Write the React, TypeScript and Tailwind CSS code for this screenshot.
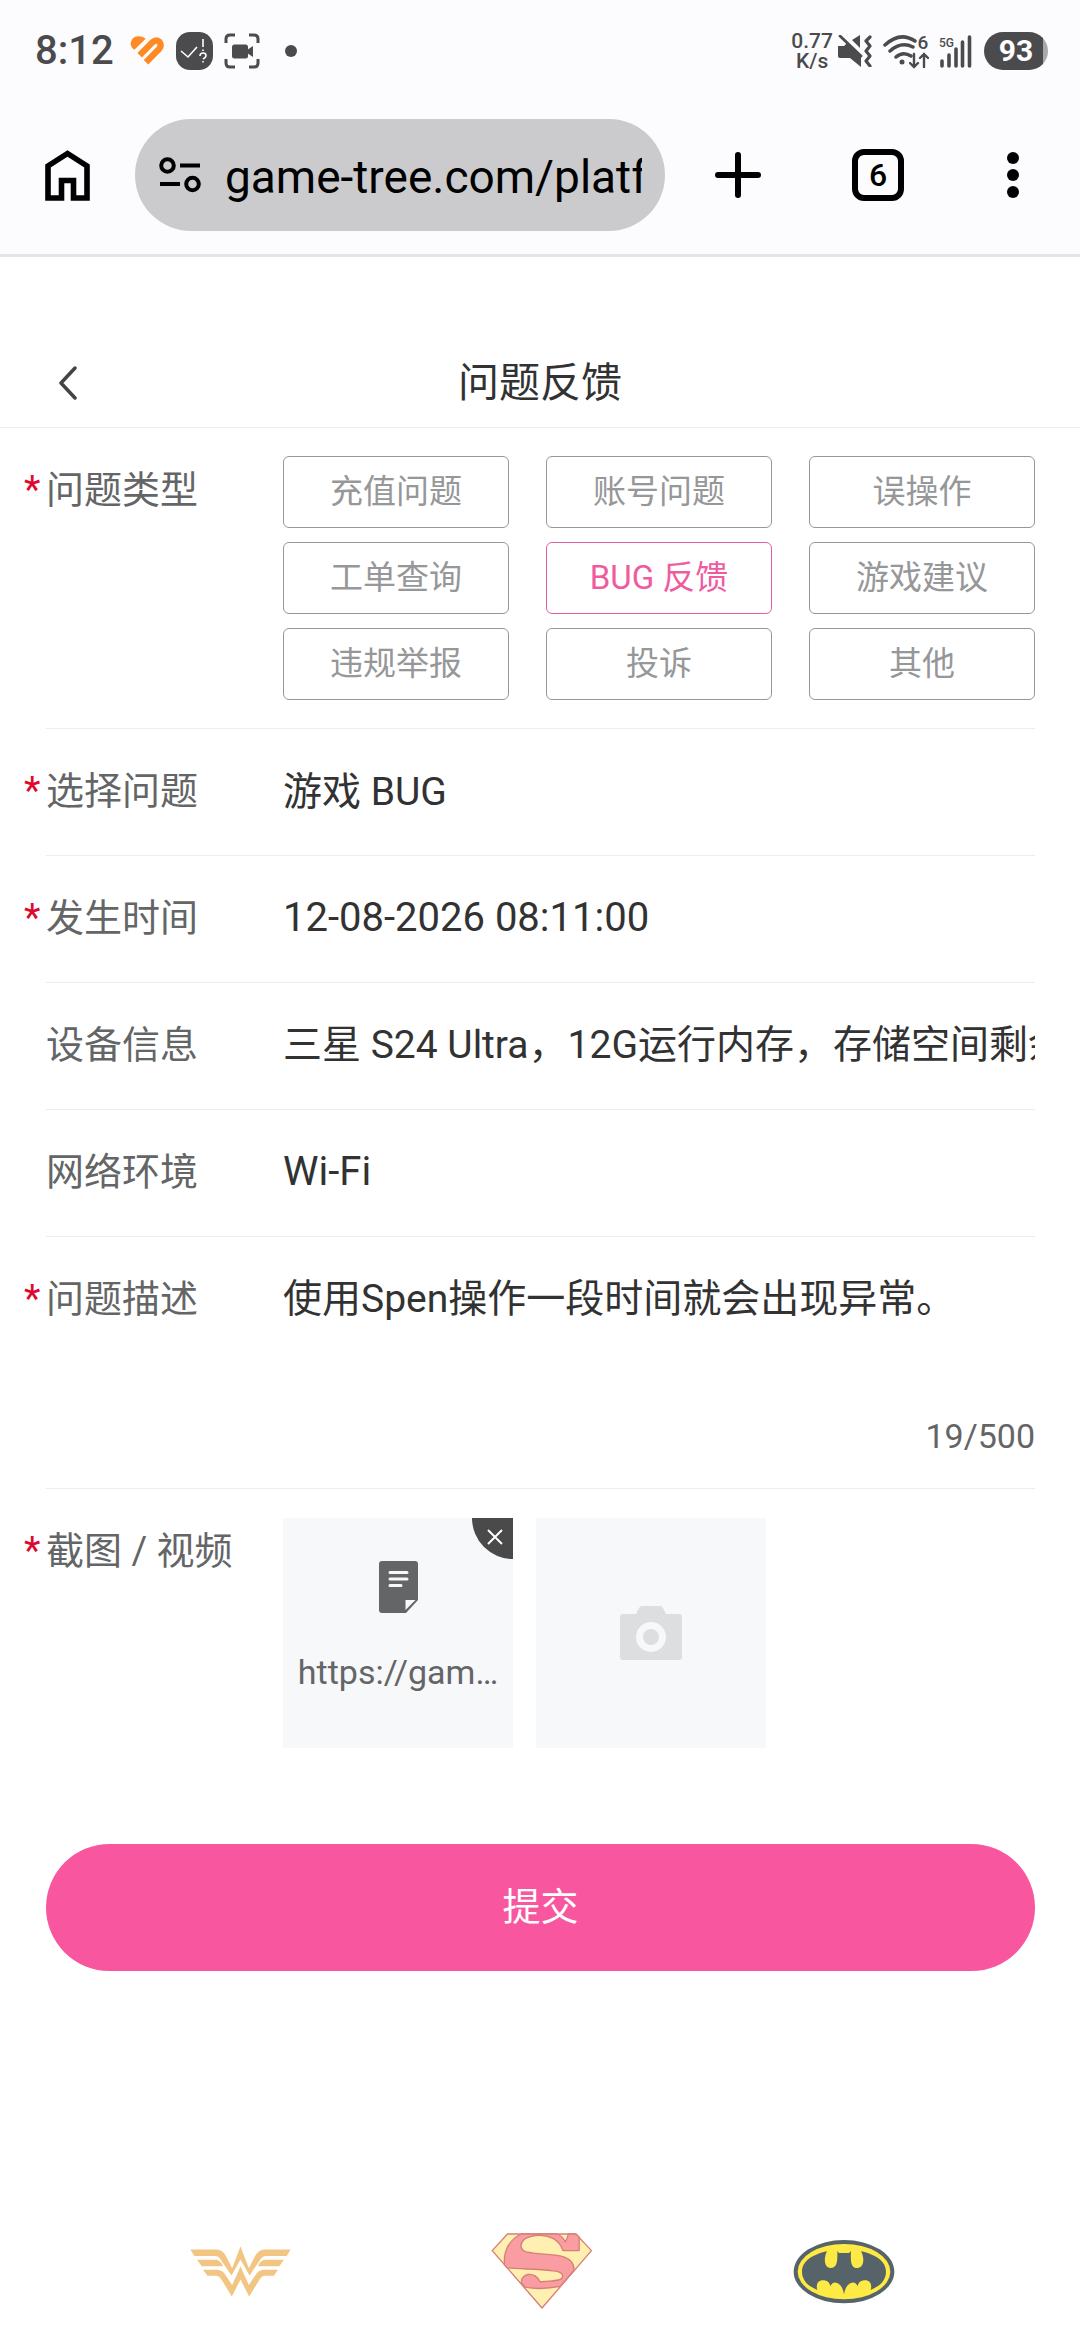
import { useState } from "react"
import type { ReactNode } from "react"

const TYPES = ["充值问题", "账号问题", "误操作", "工单查询", "BUG 反馈", "游戏建议", "违规举报", "投诉", "其他"]

function StatusBar() {
  return (
    <div className="flex h-[102px] items-center pl-[35px] pr-8 text-[#4b4b4d]">
      <span className="w-[95px] text-[40px] font-medium leading-none">8:12</span>
      <svg className="h-[30px] w-[35px]" viewBox="390 110 105 90">
        <path d="M403 151Q392 145 392 132Q394 112 415 111Q429 111 437 118Z" fill="#ff8a24" />
        <path d="M419 168L457 129Q468 119 478 127Q486 137 478 148L438 189" fill="none" stroke="#ff8a24" strokeWidth="19" />
      </svg>
      <svg className="ml-[11px] h-[38px] w-[37px]" viewBox="0 0 37 38">
        <rect width="37" height="38" rx="14" fill="#4b4b4d" />
        <path d="M5 19l7 6 9-10M27 7v8M27 17.500v1.500M24 24q0-3 3-3t3 2.500q0 2-3 3.500M27 29v1.500" fill="none" stroke="#fff" strokeWidth="1.600" />
      </svg>
      <svg className="ml-[11px] h-9 w-9" viewBox="0 0 36 36">
        <path d="M2 10V6q0-4 4-4h5M25 2h5q4 0 4 4v4M34 26v4q0 4-4 4h-5M11 34H6q-4 0-4-4v-4" fill="none" stroke="currentColor" strokeWidth="3" />
        <rect x="8" y="11.500" width="16" height="14" rx="2.500" fill="currentColor" />
        <path d="M23 17l6-4v11l-6-4z" fill="currentColor" />
      </svg>
      <span className="ml-[25px] size-3 rounded-full bg-[#4b4b4d]" />

      <div className="ml-auto flex items-center">
        <div className="text-center text-[21px] font-medium leading-5">
          <div>0.77</div>
          <div>K/s</div>
        </div>
        <svg className="ml-1 h-8 w-[35px]" viewBox="836 35 35 32" fill="currentColor">
          <path d="M837 46h6l3-3 14 14v10l-11-9h-10q-2 0-2-2zM851 40l8-5v13z" />
          <path d="M839 36l21 20" stroke="currentColor" strokeWidth="2.800" strokeLinecap="round" />
          <path d="M869 37l-4 4 4 5-4 5 4 5-4 5 4 5" fill="none" stroke="currentColor" strokeWidth="3.200" strokeLinecap="round" strokeLinejoin="round" />
        </svg>
        <div className="ml-[10px] flex h-[35px]">
          <svg className="h-[35px] w-[35px]" viewBox="881 33 35 35" fill="none" stroke="currentColor" strokeWidth="3.500" strokeLinecap="round">
            <path d="M884 44q15-14 30-4M889 50q11-10 23-4M895 56q7-6 15-1" />
            <circle cx="901" cy="61" r="2.500" fill="currentColor" stroke="none" />
          </svg>
          <div className="flex flex-col items-center">
            <span className="text-[19px] font-medium leading-[18px]">6</span>
            <svg className="h-[17px] w-5 -ml-2" viewBox="908 51 20 17" fill="none" stroke="currentColor" strokeWidth="2.400" strokeLinecap="round">
              <path d="M913 53v13M909 62l4 4 4-4M923 66V53M919 57l4-4 4 4" />
            </svg>
          </div>
        </div>
        <div className="ml-[10px] flex h-[35px]">
          <span className="text-[12px] font-medium leading-[18px]">5G</span>
          <svg className="-ml-[15px] h-[35px] w-[33px]" viewBox="938 33 33 35">
            <path d="M941 60v5M948 54v11M955 48v17M961.500 41v24M968.500 36v29" stroke="currentColor" strokeWidth="3.600" strokeLinecap="round" />
          </svg>
        </div>
        <div className="ml-3 flex h-[38px] w-[64px] items-center justify-center rounded-full bg-gradient-to-r from-[#4b4b4d] from-92% to-[#a9a9ac] to-92% text-[30px] font-bold leading-none text-white">
          93
        </div>
      </div>
    </div>
  )
}

function BrowserBar() {
  return (
    <div className="flex h-[155px] items-center border-b-[3px] border-[#e4e4e9] pb-1.5 pl-[45px] pr-[60px] text-black">
      <button aria-label="主页" className="shrink-0">
        <svg className="h-[51px] w-[45px]" viewBox="0 0 45 51">
          <path d="M3 48V16L22.500 3.500 42 16v32H28.500V30.500h-12V48z" fill="none" stroke="currentColor" strokeWidth="5.600" />
        </svg>
      </button>
      <div className="ml-[45px] flex h-28 min-w-0 flex-1 items-center rounded-full bg-[#cbcbcd] pl-6 pr-[23px]">
        <svg className="h-9 w-[42px] shrink-0" viewBox="0 0 42 36" fill="none" stroke="currentColor" strokeWidth="4">
          <circle cx="8.500" cy="8.500" r="6.300" />
          <circle cx="33.500" cy="27" r="6.300" />
          <path d="M21 8.500h20M1 27h20" />
        </svg>
        <input aria-label="网址" readOnly defaultValue="game-tree.com/platform" className="ml-6 min-w-0 flex-1 bg-transparent pt-1 text-[46px] leading-[60px] outline-none" />
      </div>
      <button aria-label="新标签页" className="ml-[50px] shrink-0">
        <svg className="size-[46px]" viewBox="0 0 46 46">
          <path d="M23 3v40M3 23h40" stroke="currentColor" strokeWidth="6" strokeLinecap="round" />
        </svg>
      </button>
      <button aria-label="标签页" className="ml-[91px] flex size-[52px] shrink-0 items-center justify-center rounded-[12px] border-[6px] border-black text-[32px] font-medium leading-none">
        6
      </button>
      <button aria-label="更多" className="ml-[102px] shrink-0">
        <svg className="h-[46px] w-3.5" viewBox="0 0 14 46" fill="currentColor">
          <circle cx="7" cy="6" r="6" />
          <circle cx="7" cy="23" r="6" />
          <circle cx="7" cy="40" r="6" />
        </svg>
      </button>
    </div>
  )
}

function Field({ label, htmlFor, required, last, children }: { label: string; htmlFor?: string; required?: boolean; last?: boolean; children: ReactNode }) {
  return (
    <div className={last ? "flex" : "flex border-b border-[#ededf0]"}>
      <label htmlFor={htmlFor} className="w-[237px] shrink-0 pt-8 pb-[34px] text-[38px] leading-[60px] text-[#646566]">
        {required && <span className="-ml-[22px] inline-block w-[22px] text-[#dd0a2e]">*</span>}
        {label}
      </label>
      <div className="min-w-0 flex-1">{children}</div>
    </div>
  )
}

function Logos() {
  return (
    <div className="mt-[262px] flex items-center justify-between pb-[31px] pl-[190px] pr-[185px]">
      <svg className="h-[51px] w-[101px]" viewBox="91 112 302 152" fill="#f3c582">
        <path d="M92 122H170Q189 123 198 141L217 178L242 113L267 178L286 141Q295 123 314 122H392L380 142H316Q306 143 300 154L269 200L242 152L215 200L184 154Q178 143 168 142H104Z" />
        <path d="M112 153H170Q182 155 190 172H126ZM372 153H314Q302 155 294 172H358Z" />
        <path d="M130 183H172Q189 184 198 200L217 228L242 173L267 228L286 200Q295 184 312 183H354L342 201H314Q305 202 299 212L268 263L242 212L216 263L185 212Q179 202 170 201H143Z" />
      </svg>
      <svg className="h-[76px] w-[102px]" viewBox="64 68 306 229" stroke="#d57f76" strokeWidth="4" strokeLinejoin="round">
        <path d="M113 71H319L366 121L217 294L67 121Z" fill="#ffefb0" />
        <path d="M155 71C118 88 100 122 104 164L112 173C150 178 200 175 250 182C275 184 282 192 278 203C275 212 250 213 211 215C204 200 190 190 175 193C160 196 152 208 156 219L166 231C200 238 245 234 272 229L313 181C315 160 300 145 275 138C250 130 200 133 170 125C150 118 148 100 165 86C190 72 225 72 250 84C265 92 275 105 280 121H329V80L319 71H296C295 80 290 90 287 95C283 85 275 76 262 71Z" fill="#f99da2" />
      </svg>
      <svg className="h-[65px] w-[102px]" viewBox="70 84 306 195">
        <ellipse cx="223" cy="182" rx="151" ry="95" fill="#566469" />
        <ellipse cx="223" cy="182" rx="139" ry="83" fill="#fdea45" />
        <path d="M172 121C130 130 97 150 97 182C97 208 115 225 143 237C138 220 145 208 160 208C172 208 180 214 182 226C186 214 195 212 203 216C214 222 220 232 223 250C226 232 232 222 243 216C251 212 260 214 264 226C266 214 274 208 286 208C301 208 308 220 303 237C331 225 349 208 349 182C349 150 316 130 274 121C285 140 284 170 263 171C245 171 242 155 244 120L238 126H208L203 120C204 155 201 171 183 171C162 170 162 140 172 121Z" fill="#566469" />
      </svg>
    </div>
  )
}

export default function App() {
  const [type, setType] = useState("BUG 反馈")
  const [desc, setDesc] = useState("使用Spen操作一段时间就会出现异常。")

  return (
    <div className="min-h-screen bg-white font-['Roboto','Noto_Sans_CJK_SC',sans-serif] text-[#323233]">
      <div className="bg-[#fcfcff]">
        <StatusBar />
        <BrowserBar />
      </div>

      <header className="mt-20 grid h-[91px] grid-cols-[1fr_auto_1fr] items-center border-b border-[#ededf0] px-[58px] pt-0.5">
        <button aria-label="返回" className="justify-self-start">
          <svg className="h-[34px] w-5" viewBox="0 0 20 34">
            <path d="M17 2L3 17l14 15" fill="none" stroke="#444" strokeWidth="3.500" strokeLinecap="round" strokeLinejoin="round" />
          </svg>
        </button>
        <h1 className="text-[41px] leading-[60px]">问题反馈</h1>
      </header>

      <form className="pl-[46px] pr-[45px]" onSubmit={(e) => e.preventDefault()}>
        <Field label="问题类型" required>
          <div className="grid grid-cols-3 gap-x-[37px] gap-y-3.5 py-7">
            {TYPES.map((t) => (
              <button
                key={t}
                type="button"
                aria-pressed={t === type}
                onClick={() => setType(t)}
                className={
                  t === type
                    ? "h-[72px] rounded-md border border-[#e0609f] pb-0.5 text-[33px] leading-none text-[#ee5c9f]"
                    : "h-[72px] rounded-md border border-[#969799] pb-0.5 text-[33px] leading-none text-[#969799]"
                }
              >
                {t}
              </button>
            ))}
          </div>
        </Field>
        <Field label="选择问题" htmlFor="issue" required>
          <select id="issue" className="block h-[126px] w-full appearance-none bg-transparent text-[39px] outline-none">
            <option>游戏 BUG</option>
          </select>
        </Field>
        <Field label="发生时间" htmlFor="time" required>
          <input id="time" defaultValue="12-08-2026 08:11:00" className="block w-full pt-8 pb-[34px] text-[40px] leading-[60px] outline-none" />
        </Field>
        <Field label="设备信息" htmlFor="device">
          <input id="device" defaultValue="三星 S24 Ultra，12G运行内存，存储空间剩余" className="block w-full pt-8 pb-[34px] text-[39px] leading-[60px] outline-none" />
        </Field>
        <Field label="网络环境" htmlFor="network">
          <input id="network" defaultValue="Wi-Fi" className="block w-full pt-8 pb-[34px] text-[40px] leading-[60px] outline-none" />
        </Field>
        <Field label="问题描述" htmlFor="desc" required>
          <textarea
            id="desc"
            rows={2}
            maxLength={500}
            value={desc}
            onChange={(e) => setDesc(e.target.value)}
            className="block h-[176px] w-full resize-none pt-8 text-[39px] leading-[60px] outline-none"
          />
          <div className="pb-[29px] text-right text-[34px] leading-[46px] text-[#646566]">{desc.length}/500</div>
        </Field>
        <Field label="截图 / 视频" required last>
          <div className="flex gap-[23px] pt-[29px]">
            <div className="relative flex size-[230px] flex-col items-center bg-[#f7f8fa] px-3 pt-[43px] text-[#646566]">
              <svg className="h-[52px] w-[39px]" viewBox="0 0 39 52">
                <path d="M3 0h33q3 0 3 3v36L27 52H3q-3 0-3-3V3q0-3 3-3z" fill="currentColor" />
                <path d="M11 11.500h17M11 18h17M11 24.500h11" stroke="#f7f8fa" strokeWidth="3" strokeLinecap="round" />
                <path d="M26.500 39h10l-10 10z" fill="#f7f8fa" />
              </svg>
              <span className="mt-9 w-full truncate text-center text-[34px] leading-[46px]">https://gam…</span>
              <button type="button" aria-label="删除" className="absolute right-0 top-0 flex h-[41px] w-[41px] items-center justify-center rounded-bl-full bg-[#4a4a4a] pb-1 pl-1">
                <svg className="size-4" viewBox="0 0 16 16">
                  <path d="M1 1l14 14M15 1L1 15" stroke="#fff" strokeWidth="2" />
                </svg>
              </button>
            </div>
            <button type="button" aria-label="上传" className="flex size-[230px] items-center justify-center bg-[#f7f8fa]">
              <svg className="h-[54px] w-[62px]" viewBox="0 0 62 54">
                <path d="M3 8h13l3-6q1-2 3-2h18q2 0 3 2l3 6h13q3 0 3 3v40q0 3-3 3H3q-3 0-3-3V11q0-3 3-3z" fill="#dcdee0" />
                <circle cx="31" cy="31" r="11.500" fill="none" stroke="#f7f8fa" strokeWidth="7" />
              </svg>
            </button>
          </div>
        </Field>
        <button type="submit" className="mt-24 h-[127px] w-full rounded-full bg-[#f8569e] text-[38px] text-white">
          提交
        </button>
      </form>

      <Logos />
    </div>
  )
}
